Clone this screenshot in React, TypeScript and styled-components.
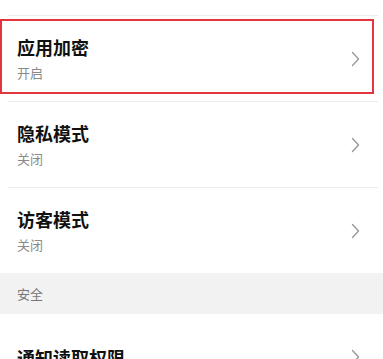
import styled, { createGlobalStyle } from 'styled-components';

const GlobalStyle = createGlobalStyle`
  html, body {
    margin: 0;
    padding: 0;
    background: #fff;
  }
  body {
    font-family: 'Noto Sans CJK SC', 'Noto Sans', sans-serif;
    -webkit-font-smoothing: antialiased;
  }
`;

interface Item {
  title: string;
  status?: string;
  highlighted?: boolean;
}

const privacyItems: Item[] = [
  { title: '应用加密', status: '开启', highlighted: true },
  { title: '隐私模式', status: '关闭' },
  { title: '访客模式', status: '关闭' },
];

const securityItems: Item[] = [{ title: '通知读取权限' }];

function Chevron() {
  return (
    <Arrow width="9" height="16" viewBox="0 0 9 16">
      <polyline points="1.5,1.5 7.5,8 1.5,14.5" />
    </Arrow>
  );
}

function SettingRow({ title, status, highlighted }: Item) {
  return (
    <Row>
      <Texts>
        <Title>{title}</Title>
        {status && <Status>{status}</Status>}
      </Texts>
      <Chevron />
      {highlighted && <Marker />}
    </Row>
  );
}

export default function App() {
  return (
    <Page>
      <GlobalStyle />
      <TopSpace />
      {privacyItems.map((item) => (
        <div key={item.title}>
          <Divider />
          <SettingRow {...item} />
        </div>
      ))}
      <SectionHeader>安全</SectionHeader>
      {securityItems.map((item) => (
        <SettingRow key={item.title} {...item} />
      ))}
    </Page>
  );
}

const Page = styled.div`
  width: 383px;
  background: #fff;
`;

const TopSpace = styled.div`
  height: 15px;
`;

const Divider = styled.div`
  height: 1px;
  margin: 0 5px 0 8px;
  background: #ececec;
`;

const Row = styled.div`
  position: relative;
  height: 85px;
  padding: 0 23px 0 17px;
  display: flex;
  align-items: center;
  justify-content: space-between;
  box-sizing: border-box;
`;

const Texts = styled.div`
  display: flex;
  flex-direction: column;
  gap: 5px;
`;

const Title = styled.span`
  font-size: 18px;
  line-height: 24px;
  font-weight: 700;
  color: #111;
`;

const Status = styled.span`
  font-size: 13px;
  line-height: 18px;
  color: #8a8a8a;
`;

const Arrow = styled.svg`
  flex-shrink: 0;
  fill: none;
  stroke: #9a9a9a;
  stroke-width: 1.4;
  stroke-linecap: round;
  stroke-linejoin: round;
`;

const Marker = styled.div`
  position: absolute;
  top: 3px;
  left: 0;
  width: 374px;
  height: 75px;
  border: 2px solid #e3353d;
  box-sizing: border-box;
  pointer-events: none;
`;

const SectionHeader = styled.div`
  height: 41px;
  padding-left: 17px;
  display: flex;
  align-items: center;
  background: #f2f2f2;
  font-size: 13px;
  color: #777;
`;
